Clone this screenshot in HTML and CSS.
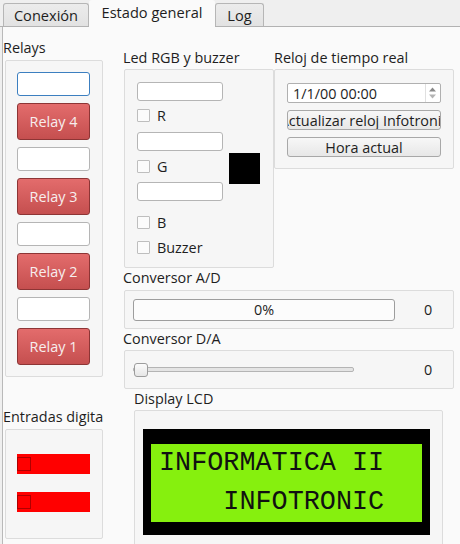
FILE: index.html
```html
<!DOCTYPE html>
<html>
<head>
<meta charset="utf-8">
<link rel="stylesheet" href="styles.css">
</head>
<body>
<div class="window">
  <div class="tabbar">
    <div class="tab">Conexión</div>
    <div class="tab active">Estado general</div>
    <div class="tab">Log</div>
  </div>
  <div class="pane">
    <div class="col-left">
      <div class="label">Relays</div>
      <div class="group relays">
        <div class="edit focus"></div>
        <div class="relay">Relay 4</div>
        <div class="edit"></div>
        <div class="relay">Relay 3</div>
        <div class="edit"></div>
        <div class="relay">Relay 2</div>
        <div class="edit"></div>
        <div class="relay">Relay 1</div>
      </div>
      <div class="label entr">Entradas digitales</div>
      <div class="group inputs">
        <div class="led-in"><span class="in-chk"></span></div>
        <div class="led-in"><span class="in-chk"></span></div>
      </div>
    </div>
    <div class="col-right">
      <div class="top-row">
        <div class="section led">
          <div class="label">Led RGB y buzzer</div>
          <div class="group rgb">
            <div class="rgb-controls">
              <div class="edit small"></div>
              <div class="check c1"><span class="box"></span><span>R</span></div>
              <div class="edit small e2"></div>
              <div class="check c2"><span class="box"></span><span>G</span></div>
              <div class="edit small e3"></div>
              <div class="check c3"><span class="box"></span><span>B</span></div>
              <div class="check c4"><span class="box"></span><span>Buzzer</span></div>
            </div>
            <div class="swatch"></div>
          </div>
        </div>
        <div class="section reloj">
          <div class="label">Reloj de tiempo real</div>
          <div class="group clock">
            <div class="spin">
              <span class="spin-text">1/1/00 00:00</span>
              <span class="arrows">
                <svg width="9" height="14" viewBox="0 0 9 14"><path d="M1 5.5 L4.5 1.5 L8 5.5 Z" fill="#8a8a8a"/><path d="M1 8.5 L4.5 12.5 L8 8.5 Z" fill="#b4b4b4"/></svg>
              </span>
            </div>
            <div class="btn"><span>Actualizar reloj Infotronic</span></div>
            <div class="btn"><span>Hora actual</span></div>
          </div>
        </div>
      </div>
      <div class="label">Conversor A/D</div>
      <div class="group conv">
        <div class="progress">0%</div>
        <div class="value">0</div>
      </div>
      <div class="label">Conversor D/A</div>
      <div class="group conv">
        <div class="slider"><div class="groove"></div><div class="handle"></div></div>
        <div class="value">0</div>
      </div>
      <div class="lcd-section">
        <div class="label">Display LCD</div>
        <div class="group lcdbox">
          <div class="lcd">
            <div class="lcd-screen">
              <div class="lcd-line">INFORMATICA II</div>
              <div class="lcd-line">    INFOTRONIC</div>
            </div>
          </div>
        </div>
      </div>
    </div>
  </div>
</div>
</body>
</html>
```
FILE: styles.css
```css
html, body {
  margin: 0;
  padding: 0;
}
body {
  width: 460px;
  height: 544px;
  overflow: hidden;
  background: #efefef;
  font-family: "Open Sans", "Noto Sans", sans-serif;
  font-size: 14.4px;
  color: #1e1e1e;
}
.window {
  width: 460px;
  height: 544px;
  display: flex;
  flex-direction: column;
}
.tabbar {
  height: 26px;
  display: flex;
  align-items: flex-end;
  padding-left: 3px;
  border-bottom: 1px solid #b2b2b2;
  position: relative;
  z-index: 1;
}
.tab {
  height: 23px;
  box-sizing: border-box;
  border: 1px solid #b6b6b6;
  border-bottom: none;
  border-radius: 3px 3px 0 0;
  background: linear-gradient(#ececec, #e2e2e2);
  display: flex;
  align-items: center;
  justify-content: center;
  font-size: 14.6px;
  white-space: nowrap;
}
.tab:nth-child(1) { width: 86px; }
.tab:nth-child(2) { width: 126px; }
.tab:nth-child(3) { width: 49px; }
.tab.active {
  height: 27px;
  margin-bottom: -1px;
  background: #fafafa;
  border: none;
  padding-bottom: 4px;
}
.pane {
  flex: 1;
  background: #fafafa;
  border-left: 1px solid #b9b9b9;
  margin-left: 2px;
  display: flex;
  padding-top: 11px;
  overflow: hidden;
}
.label {
  height: 22px;
  line-height: 20px;
  white-space: nowrap;
}
.group {
  box-sizing: border-box;
  background: #f6f6f6;
  border: 1px solid #dcdcdc;
  border-radius: 2px;
}
.col-left {
  width: 101px;
  overflow: hidden;
  flex: none;
}
.col-left .group { margin-left: 2px; }
.relays {
  width: 98px;
  height: 317px;
  padding: 11px 0 0 11px;
  display: flex;
  flex-direction: column;
}
.edit {
  box-sizing: border-box;
  width: 73px;
  height: 24px;
  background: #ffffff;
  border: 1px solid #b5b5b5;
  border-radius: 3px;
  flex: none;
}
.edit.focus {
  border-color: #3c7fc0;
}
.relay {
  box-sizing: border-box;
  width: 73px;
  height: 37px;
  margin: 7px 0;
  background: linear-gradient(#e36c6c, #c54f4f);
  border: 1px solid #8d3535;
  border-radius: 3px;
  color: #f7eeee;
  display: flex;
  align-items: center;
  justify-content: center;
  flex: none;
}
.label.entr {
  margin-top: 30px;
  height: 22px;
}
.inputs {
  width: 98px;
  height: 110px;
  padding: 24px 0 0 11px;
}
.led-in {
  width: 73px;
  height: 20px;
  background: #ff0000;
  margin-bottom: 18px;
  display: flex;
  align-items: center;
}
.in-chk {
  box-sizing: border-box;
  width: 14px;
  height: 14px;
  border: 1px solid #b00000;
}
.col-right {
  margin-left: 19px;
  margin-top: 9px;
  width: 331px;
  flex: none;
}
.top-row {
  display: flex;
}
.led .label, .reloj .label { height: 21px; padding-top: 1px; }
.rgb {
  width: 150px;
  height: 199px;
  margin-left: 1px;
  display: flex;
  padding: 12px 0 0 12px;
}
.rgb-controls {
  display: flex;
  flex-direction: column;
  width: 86px;
}
.edit.small {
  width: 86px;
  height: 19px;
}
.check {
  display: flex;
  align-items: center;
  height: 13px;
  gap: 7px;
}
.check .box {
  width: 13px;
  height: 13px;
  box-sizing: border-box;
  border: 1px solid #bebebe;
  background: #fbfbfb;
  border-radius: 1px;
}
.c1 { margin-top: 8px; }
.e2 { margin-top: 10px; }
.c2 { margin-top: 9px; }
.e3 { margin-top: 9px; }
.c3 { margin-top: 15px; }
.c4 { margin-top: 12px; }
.swatch {
  width: 31px;
  height: 31px;
  background: #000;
  margin-left: 6px;
  margin-top: 71px;
}
.clock {
  width: 180px;
  height: 100px;
  padding: 13px 0 0 12px;
  display: flex;
  flex-direction: column;
  gap: 7px;
}
.spin {
  box-sizing: border-box;
  width: 154px;
  height: 20px;
  background: #fff;
  border: 1px solid #b0b0b0;
  border-radius: 2px;
  display: flex;
  align-items: center;
  justify-content: space-between;
  padding: 0 3px 0 5px;
}
.arrows {
  display: flex;
  align-items: center;
  border-left: 1px solid #e0e0e0;
  padding-left: 2px;
  height: 18px;
}
.btn {
  box-sizing: border-box;
  width: 154px;
  height: 20px;
  background: linear-gradient(#f7f7f7, #e7e7e7);
  border: 1px solid #a8a8a8;
  border-radius: 3px;
  display: flex;
  align-items: center;
  justify-content: center;
  overflow: hidden;
  white-space: nowrap;
}
.btn span { flex: none; }
.conv {
  width: 330px;
  height: 39px;
  margin-left: 1px;
  display: flex;
  align-items: center;
  padding-left: 8px;
}
.progress {
  box-sizing: border-box;
  width: 262px;
  height: 22px;
  border: 1px solid #9d9d9d;
  border-radius: 3px;
  background: #fcfcfc;
  display: flex;
  align-items: center;
  justify-content: center;
}
.value {
  margin-left: 29px;
}
.conv + .label { height: 21px; }
.slider {
  width: 262px;
  height: 14px;
  display: flex;
  align-items: center;
  position: relative;
}
.groove {
  box-sizing: border-box;
  width: 221px;
  height: 5px;
  border: 1px solid #b4b4b4;
  background: #e4e4e4;
  border-radius: 2px;
}
.handle {
  position: absolute;
  left: 1px;
  top: 0;
  box-sizing: border-box;
  width: 14px;
  height: 14px;
  border: 1px solid #9c9c9c;
  border-radius: 3px;
  background: linear-gradient(#fbfbfb, #e6e6e6);
}
.lcd-section {
  margin-left: 11px;
}
.lcd-section .label { height: 21px; }
.lcdbox {
  width: 309px;
  height: 140px;
  padding: 18px 0 0 8px;
}
.lcd {
  width: 287px;
  height: 106px;
  background: #000;
  box-sizing: border-box;
  padding: 15px 8px 13px 8px;
}
.lcd-screen {
  height: 78px;
  background: #86f00e;
  box-sizing: border-box;
  padding: 0 0 0 8px;
}
.lcd-line {
  font-family: "Liberation Mono", "DejaVu Sans Mono", monospace;
  font-size: 26.8px;
  line-height: 39px;
  white-space: pre;
  color: #111;
}
```
